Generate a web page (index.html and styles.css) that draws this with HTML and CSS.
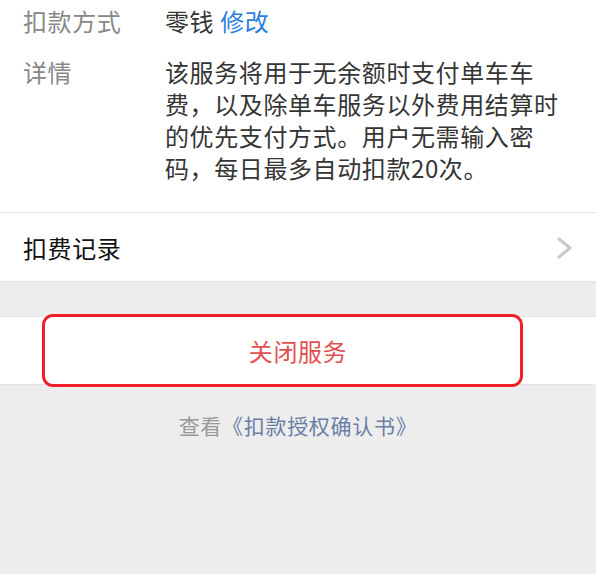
FILE: index.html
```html
<!DOCTYPE html>
<html lang="zh-CN">
<head>
    <meta charset="UTF-8">
    <meta name="viewport" content="width=device-width, initial-scale=1.0">
    <title>扣款服务</title>
    <link rel="stylesheet" href="styles.css">
</head>
<body>
    <!-- Service info -->
    <div class="info-section">
        <div class="info-row">
            <div class="info-label">扣款方式</div>
            <div class="info-value">零钱 <a class="link-blue" href="#">修改</a></div>
        </div>
        <div class="info-row">
            <div class="info-label">详情</div>
            <div class="info-value">该服务将用于无余额时支付单车车费，以及除单车服务以外费用结算时的优先支付方式。用户无需输入密码，每日最多自动扣款20次。</div>
        </div>
    </div>

    <!-- Records -->
    <div class="cell">
        <div class="cell-title">扣费记录</div>
        <svg class="chevron" width="16" height="22" viewBox="0 0 16 22">
            <polyline points="2,2 13,11 2,20" fill="none" stroke="#c7c7cc" stroke-width="3" stroke-linecap="round" stroke-linejoin="round"/>
        </svg>
    </div>

    <!-- Close button -->
    <div class="close-block">
        <button class="close-btn">关闭服务</button>
        <div class="highlight"></div>
    </div>

    <p class="footnote">查看<a class="link-gray" href="#">《扣款授权确认书》</a></p>
</body>
</html>
```

FILE: styles.css
```css
body {
    font-family: "Noto Sans CJK SC", "Noto Sans", sans-serif;
    background-color: #ededed;
    margin: 0;
    padding: 0;
}

a {
    text-decoration: none;
}

.info-section {
    background-color: #fff;
    padding: 5px 26px 28px 23px;
    border-bottom: 1px solid #e3e3e3;
    display: flex;
    flex-direction: column;
    gap: 19px;
}

.info-row {
    display: flex;
    font-size: 24px;
    line-height: 32px;
    letter-spacing: 0.6px;
}

.info-label {
    width: 142px;
    flex-shrink: 0;
    color: #888;
}

.info-value {
    flex: 1;
    color: #353535;
}

.link-blue {
    color: #2b7fe0;
}

.cell {
    display: flex;
    align-items: center;
    justify-content: space-between;
    height: 68px;
    padding: 0 23px 0 23px;
    background-color: #fff;
    border-bottom: 1px solid #e3e3e3;
}

.cell-title {
    font-size: 24px;
    letter-spacing: 0.6px;
    color: #111;
}

.chevron {
    display: block;
    margin-top: 1px;
}

.close-block {
    position: relative;
    margin-top: 34px;
    background-color: #fff;
    border-top: 1px solid #e3e3e3;
    border-bottom: 1px solid #e3e3e3;
}

.close-btn {
    display: block;
    width: 100%;
    height: 67px;
    padding: 0;
    border: none;
    background: none;
    font-family: inherit;
    font-size: 24px;
    letter-spacing: 0.6px;
    color: #e05050;
    cursor: pointer;
}

.highlight {
    position: absolute;
    top: -3px;
    left: 42px;
    width: 481px;
    height: 73px;
    box-sizing: border-box;
    border: 3px solid #f0202a;
    border-radius: 11px;
    pointer-events: none;
}

.footnote {
    margin: 25px 0 0;
    text-align: center;
    font-size: 21px;
    line-height: 30px;
    letter-spacing: 0.7px;
    color: #999;
}

.link-gray {
    color: #6b7ea6;
}
```
